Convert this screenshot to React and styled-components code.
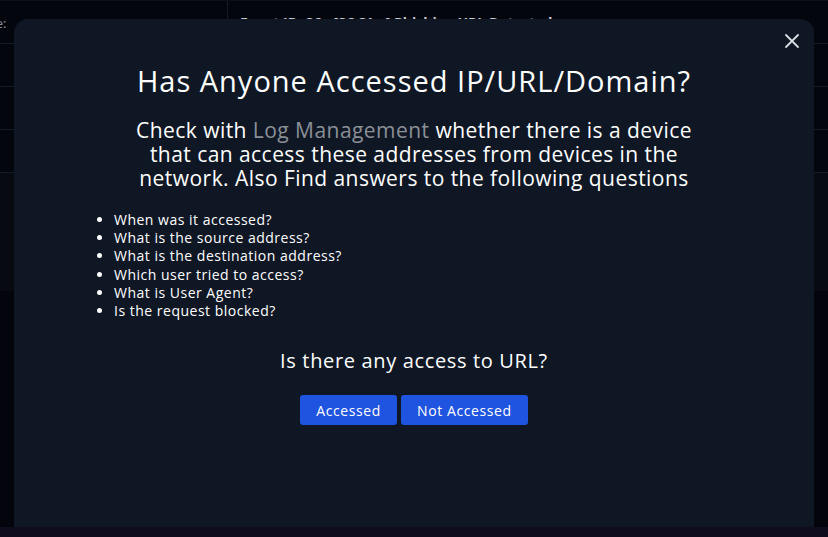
import styled, { createGlobalStyle } from "styled-components";

const GlobalStyle = createGlobalStyle`
  html, body {
    margin: 0;
    padding: 0;
    background: #03050c;
    font-family: "Open Sans", "Liberation Sans", sans-serif;
    overflow: hidden;
  }
`;

const QUESTIONS = [
  "When was it accessed?",
  "What is the source address?",
  "What is the destination address?",
  "Which user tried to access?",
  "What is User Agent?",
  "Is the request blocked?",
];

function App() {
  return (
    <>
      <GlobalStyle />
      <StPage>
        <StTable>
          <StRow>
            <StLabelCell>Type:</StLabelCell>
            <StValueCell>Event ID: 86 - [SOC1...] Phishing URL Detected</StValueCell>
          </StRow>
          <StRow />
          <StRow />
          <StRow />
          <StDetail />
        </StTable>
        <StFooter />

        <StModal>
          <StClose aria-label="close">
            <svg width="16" height="16" viewBox="0 0 16 16">
              <path
                d="M2 2 L14 14 M14 2 L2 14"
                stroke="#d8dbe0"
                strokeWidth="1.8"
                strokeLinecap="round"
              />
            </svg>
          </StClose>
          <StTitle>Has Anyone Accessed IP/URL/Domain?</StTitle>
          <StText>
            Check with <StMuted>Log Management</StMuted> whether there is a device
            that can access these addresses from devices in the network. Also Find
            answers to the following questions
          </StText>
          <StList>
            {QUESTIONS.map((q) => (
              <li key={q}>{q}</li>
            ))}
          </StList>
          <StQuestion>Is there any access to URL?</StQuestion>
          <StActions>
            <StButton>Accessed</StButton>
            <StButton>Not Accessed</StButton>
          </StActions>
        </StModal>
      </StPage>
    </>
  );
}

export default App;

const StPage = styled.div`
  position: relative;
  width: 828px;
  height: 537px;
  display: flex;
  flex-direction: column;
  background: #03040c;
`;

const StTable = styled.div`
  display: flex;
  flex-direction: column;
  border-top: 1px solid #0b0f1a;
`;

const StRow = styled.div`
  display: flex;
  height: 42px;
  border-bottom: 1px solid #151a25;
  background: #04060d;
`;

const StLabelCell = styled.div`
  width: 228px;
  box-sizing: border-box;
  border-right: 1px solid #151a25;
  padding: 13px 0 0;
  color: #8a8f99;
  font-size: 13px;
  text-indent: -26px;
`;

const StValueCell = styled.div`
  padding: 12px 0 0 12px;
  color: #c9ccd3;
  font-size: 14px;
  font-weight: 700;
`;

const StDetail = styled.div`
  height: 118px;
  background: #070a11;
`;

const StFooter = styled.div`
  margin-top: auto;
  height: 10px;
  background: #0e0c1d;
`;

const StModal = styled.div`
  position: absolute;
  left: 14px;
  top: 19px;
  width: 800px;
  height: 508px;
  box-sizing: border-box;
  background: #0f1725;
  border-radius: 14px 14px 0 0;
  padding: 45px 60px 0;
  display: flex;
  flex-direction: column;
  align-items: center;
  color: #ffffff;
  font-family: "Open Sans", "Liberation Sans", sans-serif;
`;

const StClose = styled.button`
  position: absolute;
  top: 14px;
  right: 14px;
  width: 16px;
  height: 16px;
  padding: 0;
  border: none;
  background: none;
  display: flex;
  cursor: pointer;
`;

const StTitle = styled.h2`
  margin: 0;
  font-size: 29px;
  font-weight: 400;
  letter-spacing: 1px;
  line-height: 34px;
  text-align: center;
`;

const StText = styled.p`
  margin: 20px 0 0;
  width: 580px;
  font-size: 21px;
  letter-spacing: 0.45px;
  line-height: 24px;
  text-align: center;
`;

const StMuted = styled.span`
  color: #8b8f96;
`;

const StList = styled.ul`
  align-self: stretch;
  margin: 21px 0 0;
  padding-left: 40px;
  font-size: 14px;
  letter-spacing: 0.5px;
  line-height: 18.2px;
`;

const StQuestion = styled.div`
  margin-top: 29px;
  font-size: 20px;
  letter-spacing: 0.65px;
  line-height: 24px;
`;

const StActions = styled.div`
  display: flex;
  gap: 4px;
  margin-top: 22px;
`;

const StButton = styled.button`
  height: 30px;
  padding: 0 16px;
  border: none;
  border-radius: 3px;
  background: #1f54e0;
  color: #ffffff;
  font-family: inherit;
  font-size: 14px;
  letter-spacing: 0.6px;
  cursor: pointer;
`;
